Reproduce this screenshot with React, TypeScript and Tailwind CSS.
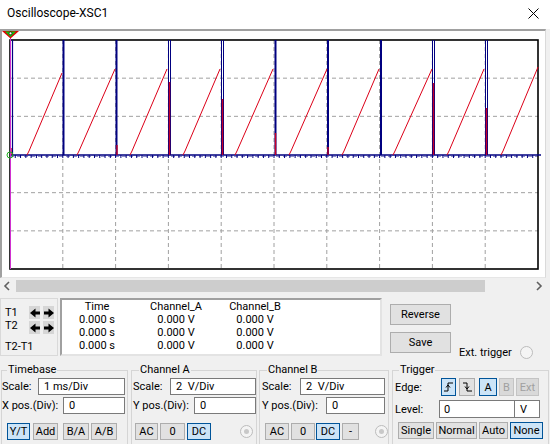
import React from 'react'

const X0 = 10
const X1 = 538
const Y0 = 40
const Y1 = 269
const YC = 155
const DX = 52.8
const DY = 38.17

// channel B spikes (x, double line?)
const spikes: [number, boolean][] = [
    [63.5, false], [116.5, false], [168.5, true], [221.5, true], [275.5, false],
    [328, false], [381, false], [432.5, true], [485.5, true],
]

// channel A drops at the spikes (x, top y)
const drops: [number, number][] = [
    [11, 148], [117, 145], [169.5, 82], [222.5, 99], [275.5, 133],
    [328, 147], [433.5, 83], [486.5, 108],
]

// channel A ramps: start x, end x, top y
const ramps: [number, number, number][] = [
    [27, 62, 73], [77, 115, 69], [130, 167, 69], [183, 220, 69], [235, 273, 69],
    [289, 327, 69], [342, 379, 69], [393, 432, 69], [447, 484, 69], [501, 538, 67],
]

const Scope = () => (
    <svg width="543" height="246" viewBox="2 31 543 246" className="block">
        {/* grid */}
        {[1, 2, 3, 4, 5, 6, 7, 8, 9].map((i) => (
            <line key={'v' + i} x1={X0 + i * DX} y1={Y0} x2={X0 + i * DX} y2={Y1} stroke="#a0a0a0" strokeDasharray="4 3" />
        ))}
        {[1, 2, 4, 5].map((j) => (
            <line key={'h' + j} x1={X0} y1={Y0 + j * DY} x2={X1} y2={Y0 + j * DY} stroke="#a0a0a0" strokeDasharray="4 3" />
        ))}
        <line x1={X0} y1={YC + 1.5} x2={X1} y2={YC + 1.5} stroke="#9090c8" strokeDasharray="4 3" />
        <rect x={X0} y={Y0} width={X1 - X0} height={Y1 - Y0} fill="none" stroke="#000" strokeWidth="1.6" />

        {/* centre axis + ticks */}
        <line x1={X0} y1={YC} x2={541} y2={YC} stroke="#000080" strokeWidth="1.5" />
        {Array.from({ length: 99 }, (_, t) => (
            <line key={'t' + t} x1={X0 + (t + 1) * 5.28} y1={YC} x2={X0 + (t + 1) * 5.28} y2={YC + 3} stroke="#000080" />
        ))}

        {/* channel B */}
        <line x1={12.5} y1={Y0} x2={12.5} y2={YC} stroke="#000080" strokeWidth="1.2" />
        {spikes.map(([x, d]) =>
            d ? (
                <g key={'s' + x}>
                    <line x1={x} y1={Y0} x2={x} y2={YC} stroke="#000080" />
                    <line x1={x + 2} y1={Y0} x2={x + 2} y2={YC} stroke="#000080" />
                </g>
            ) : (
                <line key={'s' + x} x1={x} y1={Y0} x2={x} y2={YC} stroke="#000080" strokeWidth="2" />
            )
        )}

        {/* channel A */}
        {ramps.map(([a, b, top]) => (
            <polyline key={'r' + a} points={`${a},${YC} ${a + 2},${YC - 4} ${b},${top}`} fill="none" stroke="#dc0018" strokeWidth="1" />
        ))}
        {drops.map(([x, top]) => (
            <line key={'d' + x} x1={x} y1={top} x2={x} y2={YC} stroke="#c80028" strokeWidth="1.4" />
        ))}

        {/* cursor T1 */}
        <line x1={10.5} y1={36} x2={10.5} y2={Y1} stroke="#d030d0" />
        <polygon points="2,31 19,31 10.5,38.5" fill="#e00000" />
        <polygon points="5,31.5 16,31.5 10.5,37" fill="#10c010" />
        <circle cx={10.5} cy={33.3} r={1.4} fill="#fff" stroke="#000" strokeWidth="0.6" />
        <circle cx={10} cy={YC} r={3} fill="none" stroke="#20b020" />
    </svg>
)

const Btn = ({ label, w, on, off }: { label: React.ReactNode; w: string; on?: boolean; off?: boolean }) => (
    <div
        className={`flex h-full items-center justify-center border ${w} ${
            on
                ? 'border-[#005499] bg-[#cce4f7] text-black'
                : off
                ? 'border-[#c4c4c4] bg-[#d9d9d9] text-[#a0a0a0]'
                : 'border-[#adadad] bg-[#e1e1e1] text-black'
        }`}
    >
        {label}
    </div>
)

const Field = ({ w, value, pl = 'pl-[5px]' }: { w: string; value: string; pl?: string }) => (
    <div className={`flex h-full items-center border border-[#7a7a7a] bg-white ${w} ${pl}`}>{value}</div>
)

const Radio = ({ dot }: { dot?: boolean }) => (
    <div className="flex size-[13px] items-center justify-center rounded-full border border-[#bcbcbc] bg-[#f4f4f4]">
        {dot && <div className="size-[5px] rounded-full bg-[#c8c8c8]" />}
    </div>
)

const Arrow = ({ left }: { left?: boolean }) => (
    <div className="flex h-[13px] w-[11px] items-center justify-center bg-[#d6d6d6]">
        <svg width="10" height="10" viewBox="0 0 10 10" className={left ? 'rotate-180' : ''}>
            <polygon points="0,3.5 4.5,3.5 4.5,0.5 10,5 4.5,9.5 4.5,6.5 0,6.5" fill="#000" />
        </svg>
    </div>
)

const RiseIcon = ({ fall }: { fall?: boolean }) => (
    <svg width="11" height="12" viewBox="0 0 11 12">
        {fall ? (
            <>
                <polyline points="1,2 5,2 5,10 10,10" fill="none" stroke="#000" strokeWidth="1" />
                <polyline points="3,5.5 5,8 7,5.5" fill="none" stroke="#000" strokeWidth="1" />
            </>
        ) : (
            <>
                <polyline points="1,10 5,10 5,2 10,2" fill="none" stroke="#000" strokeWidth="1" />
                <polyline points="3,6.5 5,4 7,6.5" fill="none" stroke="#000" strokeWidth="1" />
            </>
        )}
    </svg>
)

const Group = ({ title, w, ml, lml, children }: { title: string; w: string; ml: string; lml: string; children: React.ReactNode }) => (
    <fieldset className={`h-[100px] shrink-0 border border-[#d5d5d5] ${w} ${ml}`}>
        <legend className={`px-[1px] leading-[14px] ${lml}`}>{title}</legend>
        {children}
    </fieldset>
)

export default function App() {
    return (
        <div className="h-[444px] w-[550px] overflow-hidden bg-[#f0f0f0] text-[11px] leading-[13px] text-black [font-family:Roboto,'Noto_Sans',sans-serif]">
            {/* title bar */}
            <div className="flex h-[29px] items-center justify-between bg-white pb-[3px] pl-[7px] pr-[11px]">
                <span className="text-[12px] leading-[15px]">Oscilloscope-XSC1</span>
                <svg width="11" height="11" viewBox="0 0 11 11">
                    <path d="M0.5 0.5 L10.5 10.5 M10.5 0.5 L0.5 10.5" stroke="#000" strokeWidth="1" />
                </svg>
            </div>

            {/* scope screen */}
            <div className="h-[249px] w-[546px] border-t-2 border-l-2 border-r border-b border-t-[#a0a0a0] border-l-[#a0a0a0] border-r-[#dadada] border-b-[#e6e6e6] bg-white">
                <Scope />
            </div>

            {/* horizontal scrollbar */}
            <div className="flex h-[15px] items-center">
                <svg width="16" height="12" viewBox="0 0 16 12">
                    <polyline points="9,2 5,6 9,10" fill="none" stroke="#606060" strokeWidth="1.6" />
                </svg>
                <div className="h-[12px] w-[469px] bg-[#cdcdcd]" />
                <div className="flex-1" />
                <svg width="14" height="12" viewBox="0 0 14 12" className="mr-[3px]">
                    <polyline points="4,2 8,6 4,10" fill="none" stroke="#606060" strokeWidth="1.6" />
                </svg>
            </div>

            {/* cursor readout */}
            <div className="mt-[5px] flex h-[58px]">
                <div className="w-[58px] border border-[#d9d9d9] pl-[4px]">
                    <div className="mt-[7px] flex h-[13px] items-center">
                        <span className="w-[24px]">T1</span>
                        <Arrow left />
                        <div className="w-[3px]" />
                        <Arrow />
                    </div>
                    <div className="flex h-[13px] items-center">
                        <span className="w-[24px]">T2</span>
                        <div className="mt-[4px] flex">
                            <Arrow left />
                            <div className="w-[3px]" />
                            <Arrow />
                        </div>
                    </div>
                    <div className="mt-[8px] flex h-[13px] items-center">T2-T1</div>
                </div>
                <div className="ml-[2px] w-[322px] border-2 border-t-[#a0a0a0] border-l-[#a0a0a0] border-r-[#e3e3e3] border-b-[#e3e3e3] bg-white">
                    <div className="grid grid-cols-[70px_88px_70px] text-center leading-[13px]">
                        <div>Time</div>
                        <div>Channel_A</div>
                        <div>Channel_B</div>
                        <div>0.000 s</div>
                        <div>0.000 V</div>
                        <div>0.000 V</div>
                        <div>0.000 s</div>
                        <div>0.000 V</div>
                        <div>0.000 V</div>
                        <div>0.000 s</div>
                        <div>0.000 V</div>
                        <div>0.000 V</div>
                    </div>
                </div>
                <div className="ml-[8px] flex flex-col">
                    <div className="mt-[6px] h-[21px]">
                        <Btn label="Reverse" w="w-[61px]" />
                    </div>
                    <div className="mt-[7px] h-[21px]">
                        <Btn label="Save" w="w-[61px]" />
                    </div>
                </div>
                <div className="ml-[8px] mt-[47px] flex h-[14px] items-center">
                    <span className="w-[61px]">Ext. trigger</span>
                    <Radio />
                </div>
            </div>

            {/* setting groups */}
            <div className="mt-[7px] flex">
                <Group title="Timebase" w="w-[127px]" ml="ml-[1px]" lml="ml-[5px]">
                    <div className="mt-[1px] flex h-[17px] items-center">
                        <span className="w-[36px]">Scale:</span>
                        <Field w="w-[87px]" value="1 ms/Div" />
                    </div>
                    <div className="mt-[2px] flex h-[17px] items-center">
                        <span className="w-[61px]">X pos.(Div):</span>
                        <Field w="w-[62px]" value="0" />
                    </div>
                    <div className="mt-[9px] flex h-[17px]">
                        <div className="ml-[5px]" />
                        <Btn label="Y/T" w="w-[23px]" on />
                        <div className="ml-[3px]" />
                        <Btn label="Add" w="w-[25px]" />
                        <div className="ml-[5px]" />
                        <Btn label="B/A" w="w-[26px]" />
                        <div className="ml-[2px]" />
                        <Btn label="A/B" w="w-[26px]" />
                    </div>
                </Group>

                <Group title="Channel A" w="w-[126px]" ml="ml-[3px]" lml="ml-[7px]">
                    <div className="mt-[1px] flex h-[17px] items-center">
                        <span className="w-[38px] pl-[1px]">Scale:</span>
                        <Field w="w-[86px]" value={'2\u00a0 V/Div'} />
                    </div>
                    <div className="mt-[2px] flex h-[17px] items-center">
                        <span className="w-[62px] pl-[1px]">Y pos.(Div):</span>
                        <Field w="w-[62px]" value="0" />
                    </div>
                    <div className="mt-[9px] flex h-[17px] items-center">
                        <div className="ml-[3px]" />
                        <Btn label="AC" w="w-[23px]" />
                        <div className="ml-[2px]" />
                        <Btn label="0" w="w-[25px]" />
                        <div className="ml-[2px]" />
                        <Btn label="DC" w="w-[24px]" on />
                        <div className="ml-[29px]" />
                        <Radio dot />
                    </div>
                </Group>

                <Group title="Channel B" w="w-[129px]" ml="ml-[2px]" lml="ml-[7px]">
                    <div className="mt-[1px] flex h-[17px] items-center">
                        <span className="w-[40px] pl-[2px]">Scale:</span>
                        <Field w="w-[85px]" value={'2\u00a0 V/Div'} />
                    </div>
                    <div className="mt-[2px] flex h-[17px] items-center">
                        <span className="w-[66px] pl-[2px]">Y pos.(Div):</span>
                        <Field w="w-[59px]" value="0" />
                    </div>
                    <div className="mt-[9px] flex h-[17px] items-center">
                        <div className="ml-[5px]" />
                        <Btn label="AC" w="w-[24px]" />
                        <div className="ml-[2px]" />
                        <Btn label="0" w="w-[24px]" />
                        <div className="ml-[1px]" />
                        <Btn label="DC" w="w-[24px]" on />
                        <div className="ml-[2px]" />
                        <Btn label="-" w="w-[17px]" />
                        <div className="ml-[16px]" />
                        <Radio dot />
                    </div>
                </Group>

                <Group title="Trigger" w="w-[157px]" ml="ml-[3px]" lml="ml-[6px]">
                    <div className="mt-[1px] flex h-[18px] items-center">
                        <span className="w-[48px] pl-[2px]">Edge:</span>
                        <Btn label={<RiseIcon />} w="w-[15px]" on />
                        <div className="ml-[3px]" />
                        <Btn label={<RiseIcon fall />} w="w-[16px]" />
                        <div className="ml-[4px]" />
                        <Btn label="A" w="w-[18px]" on />
                        <div className="ml-[2px]" />
                        <Btn label="B" w="w-[15px]" off />
                        <div className="ml-[2px]" />
                        <Btn label="Ext" w="w-[23px]" off />
                    </div>
                    <div className="mt-[4px] flex h-[18px] items-center">
                        <span className="w-[46px] pl-[2px]">Level:</span>
                        <Field w="w-[76px]" value="0" pl="pl-[4px]" />
                        <div className="-ml-px flex h-full w-[26px] items-center border border-[#7a7a7a] bg-white pl-[5px]">V</div>
                    </div>
                    <div className="mt-[4px] flex h-[17px] items-center">
                        <div className="ml-[5px]" />
                        <Btn label="Single" w="w-[36px]" />
                        <div className="ml-[2px]" />
                        <Btn label="Normal" w="w-[41px]" />
                        <div className="ml-[2px]" />
                        <Btn label="Auto" w="w-[29px]" />
                        <div className="ml-[2px]" />
                        <Btn label="None" w="w-[33px]" on />
                    </div>
                </Group>
            </div>
        </div>
    )
}
